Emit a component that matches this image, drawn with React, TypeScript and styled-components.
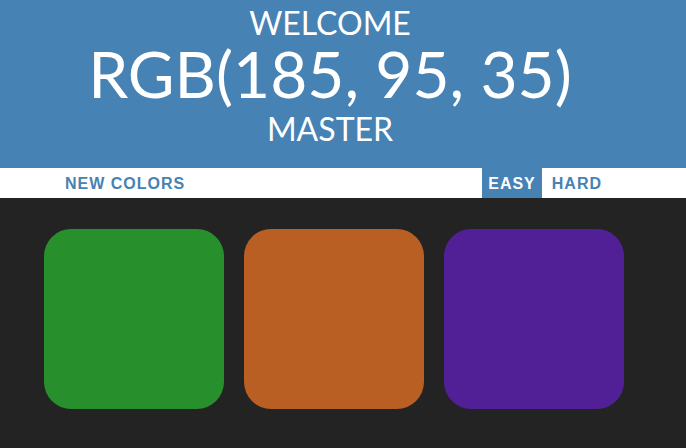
import React, { useState } from 'react';
import styled, { createGlobalStyle } from 'styled-components';

const GlobalStyle = createGlobalStyle`
  html, body {
    margin: 0;
    padding: 0;
    background: #232323;
  }
  body {
    font-family: "Liberation Sans", Arial, sans-serif;
  }
`;

const Header = styled.h1`
  margin: 0;
  height: 168px;
  box-sizing: border-box;
  padding: 5px 26px 0 0;
  background: #4682b4;
  color: #ffffff;
  text-align: center;
  font-family: Lato, "Noto Sans", sans-serif;
  font-weight: 400;
  text-transform: uppercase;
`;

const HeadLine = styled.div<{ $size: number; $lh: number }>`
  font-size: ${(p) => p.$size}px;
  line-height: ${(p) => p.$lh}px;
`;

const Stripe = styled.div`
  display: flex;
  align-items: stretch;
  height: 30px;
  background: #ffffff;
  padding: 0 78px 0 59px;
`;

const Modes = styled.div`
  display: flex;
  gap: 4px;
  margin-left: auto;
`;

const StripeButton = styled.button<{ $selected?: boolean }>`
  border: none;
  outline: none;
  margin: 0;
  padding: 2px 6px 0;
  height: 100%;
  font-family: "Liberation Sans", Arial, sans-serif;
  font-size: 16px;
  font-weight: 700;
  letter-spacing: 1px;
  text-transform: uppercase;
  cursor: pointer;
  color: ${(p) => (p.$selected ? '#ffffff' : '#4682b4')};
  background: ${(p) => (p.$selected ? '#4682b4' : 'transparent')};
`;

const Board = styled.div`
  display: flex;
  gap: 20px;
  padding: 31px 44px 0;
`;

const Square = styled.div<{ $color: string }>`
  width: 180px;
  height: 180px;
  border-radius: 15%;
  background: ${(p) => p.$color};
`;

const colors = ['rgb(39, 143, 43)', 'rgb(185, 95, 35)', 'rgb(81, 32, 150)'];

export default function App() {
  const [mode, setMode] = useState<'easy' | 'hard'>('easy');
  return (
    <>
      <GlobalStyle />
      <Header>
        <HeadLine $size={32} $lh={36}>Welcome</HeadLine>
        <HeadLine $size={64} $lh={66}>RGB(185, 95, 35)</HeadLine>
        <HeadLine $size={32} $lh={44}>Master</HeadLine>
      </Header>
      <Stripe>
        <StripeButton>New Colors</StripeButton>
        <Modes>
          <StripeButton $selected={mode === 'easy'} onClick={() => setMode('easy')}>
            Easy
          </StripeButton>
          <StripeButton $selected={mode === 'hard'} onClick={() => setMode('hard')}>
            Hard
          </StripeButton>
        </Modes>
      </Stripe>
      <Board>
        {colors.map((c) => (
          <Square key={c} $color={c} />
        ))}
      </Board>
    </>
  );
}
